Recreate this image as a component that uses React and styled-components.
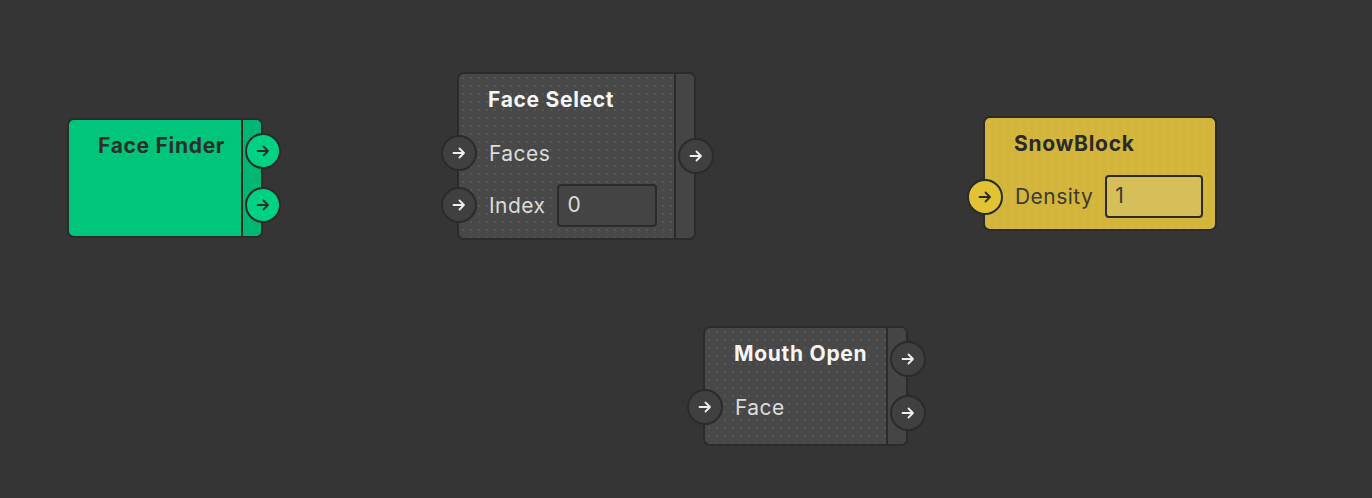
import React from "react";
import styled, { createGlobalStyle } from "styled-components";

const Global = createGlobalStyle`
  html, body { margin: 0; padding: 0; background: #353535; }
  body { font-family: Inter, "Noto Sans", "Liberation Sans", sans-serif; }
`;

const Canvas = styled.div`
  position: relative;
  width: 1372px;
  height: 498px;
  overflow: hidden;
  background: #353535;
`;

const themes = {
  green: { bg: "#00c57b", col: "#00b670", port: "#00d284", title: "#2b2f2c", label: "#2b2f2c", box: "#00b670", arrow: "#2b2f2c", dots: "rgba(0,0,0,0)" },
  dark: { bg: "#484848", col: "#454545", port: "#404040", title: "#f6f6f6", label: "#dcdcdc", box: "#444444", arrow: "#eeeeee", dots: "rgba(255,255,255,0.07)" },
  yellow: { bg: "#d2b53a", col: "#c9ad36", port: "#e2c333", title: "#2a2a2a", label: "#3c3a33", box: "#d6bf58", arrow: "#2a2a2a", dots: "rgba(255,255,255,0.10)" },
};

const NodeFrame = styled.div`
  position: absolute;
  box-sizing: border-box;
  display: flex;
  background-color: ${(p) => p.$t.bg};
  background-image: radial-gradient(circle, ${(p) => p.$t.dots} 0.7px, transparent 1.1px);
  background-size: 8px 8px;
  border: 2px solid #2b2b2b;
  border-radius: 7px;
`;

const Body = styled.div`
  flex: 1;
  display: flex;
  flex-direction: column;
  padding: 13px 12px 7px 29px;
  min-width: 0;
`;

const Title = styled.div`
  font-size: 21px;
  font-weight: 700;
  letter-spacing: 0.7px;
  line-height: 26px;
  color: ${(p) => p.$t.title};
  margin-bottom: 14px;
  white-space: nowrap;
`;

const Row = styled.div`
  display: flex;
  align-items: center;
  gap: 12px;
  height: 52px;
`;

const InPort = styled.div`
  margin-left: -47px;
`;

const Label = styled.span`
  font-size: 21px;
  letter-spacing: 0.45px;
  color: ${(p) => p.$t.label};
  white-space: nowrap;
`;

const ValueBox = styled.div`
  box-sizing: border-box;
  width: 100px;
  height: 43px;
  border: 2px solid #2b2b2b;
  border-radius: 4px;
  background: ${(p) => p.$t.box};
  color: ${(p) => p.$t.label};
  font-size: 21px;
  line-height: 37px;
  padding-left: 8px;
`;

const OutColumn = styled.div`
  box-sizing: border-box;
  width: 20px;
  border-left: 2px solid #2b2b2b;
  background: ${(p) => p.$t.col};
  border-radius: 0 5px 5px 0;
  display: flex;
  flex-direction: column;
  align-items: flex-end;
  justify-content: center;
  gap: 18px;
`;

const OutPort = styled.div`
  margin-right: -20px;
`;

const Circle = styled.div`
  box-sizing: border-box;
  width: 36px;
  height: 36px;
  border-radius: 50%;
  border: 2px solid #2b2b2b;
  background: ${(p) => p.$t.port};
  display: flex;
  align-items: center;
  justify-content: center;
  color: ${(p) => p.$t.arrow};
`;

const Arrow = () => (
  <svg width="14" height="14" viewBox="0 0 14 14" fill="none">
    <path d="M1.5 7h10.5M7.5 2.5 12 7l-4.5 4.5" stroke="currentColor" strokeWidth="1.8" strokeLinecap="round" strokeLinejoin="round" />
  </svg>
);

const Port = ({ t }) => (
  <Circle $t={t}>
    <Arrow />
  </Circle>
);

function Node({ x, y, w, h, theme, title, inputs = [], outputs = 0 }) {
  const t = themes[theme];
  return (
    <NodeFrame $t={t} style={{ left: x, top: y, width: w, height: h }}>
      <Body>
        <Title $t={t}>{title}</Title>
        {inputs.map((inp) => (
          <Row key={inp.label}>
            <InPort>
              <Port t={t} />
            </InPort>
            <Label $t={t}>{inp.label}</Label>
            {inp.value !== undefined && <ValueBox $t={t}>{inp.value}</ValueBox>}
          </Row>
        ))}
      </Body>
      {outputs > 0 && (
        <OutColumn $t={t}>
          {Array.from({ length: outputs }).map((_, i) => (
            <OutPort key={i}>
              <Port t={t} />
            </OutPort>
          ))}
        </OutColumn>
      )}
    </NodeFrame>
  );
}

export default function App() {
  return (
    <>
      <Global />
      <Canvas>
        <Node x={67} y={118} w={196} h={120} theme="green" title="Face Finder" outputs={2} />
        <Node
          x={457}
          y={72}
          w={239}
          h={168}
          theme="dark"
          title="Face Select"
          inputs={[{ label: "Faces" }, { label: "Index", value: "0" }]}
          outputs={1}
        />
        <Node
          x={983}
          y={116}
          w={234}
          h={115}
          theme="yellow"
          title="SnowBlock"
          inputs={[{ label: "Density", value: "1" }]}
        />
        <Node
          x={703}
          y={326}
          w={205}
          h={120}
          theme="dark"
          title="Mouth Open"
          inputs={[{ label: "Face" }]}
          outputs={2}
        />
      </Canvas>
    </>
  );
}
